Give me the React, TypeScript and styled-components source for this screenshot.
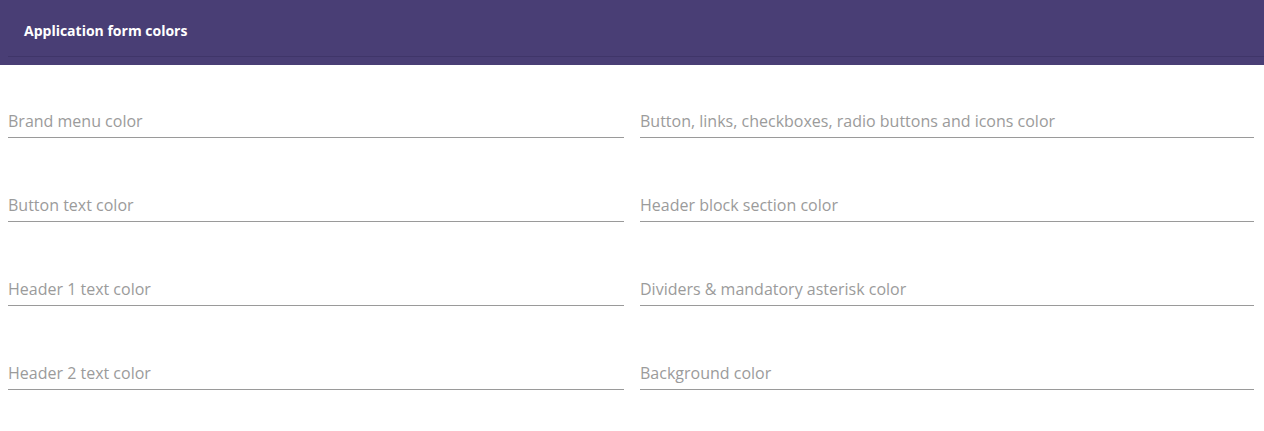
import styled, { createGlobalStyle } from "styled-components";

const GlobalStyle = createGlobalStyle`
  body {
    margin: 0;
    background: #ffffff;
    font-family: "Open Sans", "Liberation Sans", sans-serif;
  }
`;

const fields: string[] = [
  "Brand menu color",
  "Button, links, checkboxes, radio buttons and icons color",
  "Button text color",
  "Header block section color",
  "Header 1 text color",
  "Dividers & mandatory asterisk color",
  "Header 2 text color",
  "Background color",
];

const App = () => {
  return (
    <>
      <GlobalStyle />
      <Page>
        <Header>
          <HeaderInner>
            <Title>Application form colors</Title>
          </HeaderInner>
        </Header>
        <FieldGrid>
          {fields.map((label) => (
            <Field key={label}>
              <Label>{label}</Label>
            </Field>
          ))}
        </FieldGrid>
      </Page>
    </>
  );
};

export default App;

const Page = styled.div`
  width: 100%;
  min-height: 431px;
`;

const Header = styled.header`
  background: #493e75;
  padding: 0 0 8px 8px;
`;

const HeaderInner = styled.div`
  height: 57px;
  border-bottom: 1px solid #3f3569;
  display: flex;
  align-items: center;
  padding-left: 16px;
  box-sizing: border-box;
  padding-top: 6px;
`;

const Title = styled.h1`
  margin: 0;
  color: #ffffff;
  font-size: 14px;
  font-weight: 700;
  line-height: 18px;
`;

const FieldGrid = styled.div`
  display: grid;
  grid-template-columns: 616px 1fr;
  column-gap: 16px;
  row-gap: 57px;
  padding: 46px 10px 0 8px;
`;

const Field = styled.div`
  border-bottom: 1px solid #9a9a9a;
  padding-bottom: 6px;
`;

const Label = styled.span`
  display: block;
  color: #9b9b9b;
  font-size: 16px;
  line-height: 20px;
`;
